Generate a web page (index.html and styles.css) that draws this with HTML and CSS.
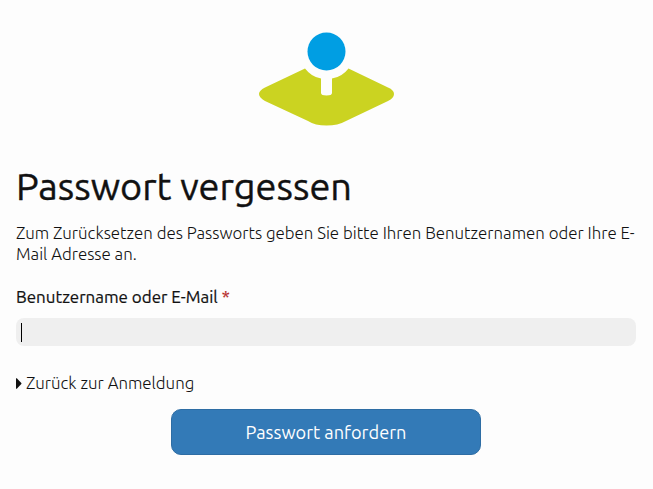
FILE: index.html
```html
<!DOCTYPE html>
<html lang="de">
<head>
<meta charset="utf-8">
<title>Passwort vergessen</title>
<link rel="stylesheet" href="styles.css">
</head>
<body>
<main class="page">
  <svg class="logo" width="136" height="96" viewBox="0 0 136 96" aria-hidden="true">
    <path fill="#cbd321" d="M47 36.500 7 55.500Q1 58.500 1 62T7 69L50 89Q57 93.500 68.500 93.500T88 89L130 69Q136 66 136 62T130 55.500L90.500 36.500Q84 45 74 46.500V61Q74 63.500 68.500 63.500T63 61V46.500Q53.500 45 47 36.500Z"/>
    <circle cx="68.500" cy="19.500" r="19" fill="#009ee3"/>
  </svg>
  <h1 class="title">Passwort vergessen</h1>
  <p class="intro">Zum Zurücksetzen des Passworts geben Sie bitte Ihren Benutzernamen oder Ihre E-<br>Mail Adresse an.</p>
  <form class="form">
    <label class="label" for="user">Benutzername oder E-Mail <span class="required">*</span></label>
    <div class="field" id="user" role="textbox" tabindex="0"><span class="caret"></span></div>
    <a class="back"><svg width="6" height="11" viewBox="0 0 6 11"><path d="M0 .5Q0 0 .8.3L5.300 4.900Q5.700 5.500 5.300 6.100L.8 10.700Q0 11 0 10.500Z" fill="#111"/></svg><span>Zurück zur Anmeldung</span></a>
    <button class="submit" type="button">Passwort anfordern</button>
  </form>
</main>
</body>
</html>
```
FILE: styles.css
```css
* { box-sizing: border-box; }
body { margin: 0; background: #fdfdfd; color: #111; font-family: Ubuntu, "Noto Sans", sans-serif; }
.page { display: flex; flex-direction: column; padding: 32px 17px 0 16px; }
.logo { align-self: center; display: block; }
.title { margin: 36px 0 0; font-size: 37.9px; line-height: 44px; font-weight: 400; white-space: nowrap; -webkit-text-stroke: 0.4px #111; }
.intro { margin: 14px 0 0; font-size: 16.88px; line-height: 21px; font-weight: 300; white-space: nowrap; }
.form { display: flex; flex-direction: column; margin-top: 22px; }
.label { font-size: 16.97px; line-height: 22px; font-weight: 400; -webkit-text-stroke: 0.2px currentColor; }
.required { color: #b52b27; }
.field { height: 28px; margin-top: 10px; padding: 5px; border-radius: 8px; background: #efefef; outline: none; }
.caret { display: block; width: 1px; height: 19px; background: #000; }
.back { display: flex; align-items: center; gap: 4px; margin-top: 26px; font-size: 16.88px; line-height: 22px; font-weight: 300; }
.submit { align-self: center; width: 310px; height: 46px; margin-top: 15px; border: 1px solid #2e6da4; border-radius: 10px; background: #337ab7; color: #fff; font: 400 18.2px "Ubuntu", "Noto Sans", sans-serif; }
```
